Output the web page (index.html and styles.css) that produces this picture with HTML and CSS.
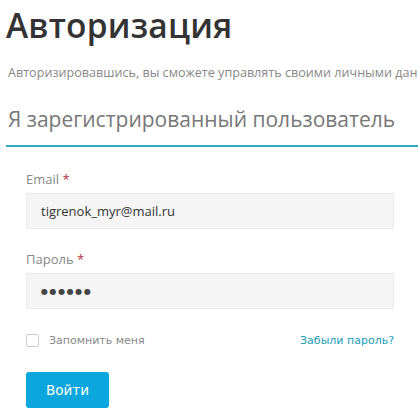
FILE: index.html
```html
<!DOCTYPE html>
<html lang="ru">
<head>
<meta charset="utf-8">
<link rel="stylesheet" href="styles.css">
</head>
<body>
<div class="page">
  <h1 class="title">Авторизация</h1>
  <p class="lead">Авторизировавшись, вы сможете управлять своими личными данными и отслеживать заказы</p>
  <h2 class="section">Я зарегистрированный пользователь</h2>
  <form class="form">
    <label class="label">Email <span class="req">*</span></label>
    <div class="input">tigrenok_myr@mail.ru</div>
    <label class="label">Пароль <span class="req">*</span></label>
    <div class="input dots">●●●●●●</div>
    <div class="row">
      <div class="remember"><span class="check"></span>Запомнить меня</div>
      <a class="forgot">Забыли пароль?</a>
    </div>
    <button type="button" class="btn">Войти</button>
  </form>
</div>
</body>
</html>
```
FILE: styles.css
```css
html, body { margin: 0; padding: 0; background: #fff; }
body { overflow: hidden; width: 418px; height: 420px; }
.page { padding: 0 0 0 6px; font-family: "Open Sans", "DejaVu Sans", sans-serif; overflow: hidden; }
.title { margin: 0; padding-top: 2px; font-size: 33.5px; font-weight: 600; color: #333; line-height: 46px; letter-spacing: 0.2px; }
.lead { margin: 17px 0 0 2px; font-size: 12.6px; color: #888; white-space: nowrap; overflow: hidden; line-height: 16px; }
.section { margin: 24px 0 0 0; padding: 0 0 12px 2px; font-size: 21px; font-weight: 400; color: #777; line-height: 28px; border-bottom: 2px solid #2ea7bf; }
.form { padding: 23px 24px 0 20px; display: flex; flex-direction: column; }
.label { font-size: 13px; color: #888; line-height: 18px; }
.req { color: #b0303a; }
.input { margin-top: 5px; height: 34px; background: #f5f5f5; border: 1px solid #ebebeb; padding-left: 14px; font-size: 13px; color: #333; line-height: 34px; margin-bottom: 21px; }
.dots { font-size: 8px; letter-spacing: 1.6px; color: #444; margin-bottom: 20px; }
.row { display: flex; justify-content: space-between; align-items: center; margin-top: 5px; font-family: "DejaVu Sans", sans-serif; font-size: 11px; }
.remember { display: flex; align-items: center; color: #888; }
.check { width: 11px; height: 11px; border: 1px solid #ccc; border-radius: 2px; margin-right: 10px; background: #fff; }
.forgot { color: #1c9dba; }
.btn { margin-top: 25px; width: 83px; height: 36px; border: 0; border-radius: 3px; background: #0aa6dd; color: #fff; font-family: "DejaVu Sans", sans-serif; font-size: 13.5px; padding: 0; }
```
